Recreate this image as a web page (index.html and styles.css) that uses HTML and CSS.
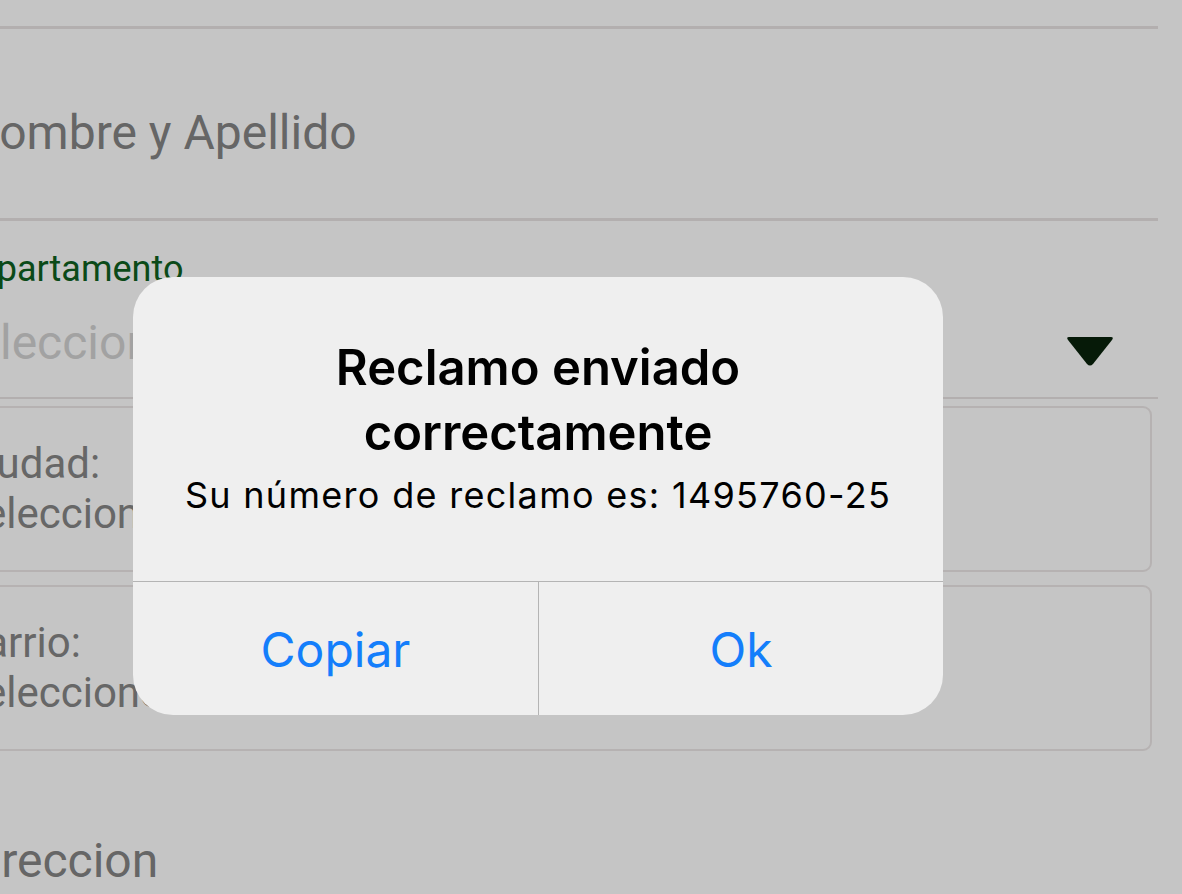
FILE: index.html
```html
<!DOCTYPE html>
<html lang="es">
<head>
<meta charset="utf-8">
<title>Reclamo</title>
<link rel="stylesheet" href="styles.css">
</head>
<body>
<div class="screen">
  <div class="form">
    <div class="rule"></div>
    <div class="field field-name"><span class="value shift-n">Nombre y Apellido</span></div>
    <div class="rule"></div>
    <div class="field field-select">
      <div class="select-label">Departamento</div>
      <div class="select-row">
        <span class="placeholder">Seleccione</span>
        <svg class="caret" width="48" height="32" viewBox="0 0 48 32"><path d="M3 2 H45 Q48 2 46 5 L27 29 Q24 32 21 29 L2 5 Q0 2 3 2 Z" fill="#061a08"/></svg>
      </div>
    </div>
    <div class="rule rule-short"></div>
    <div class="box">
      <div class="box-label">Ciudad:</div>
      <div class="box-value">Seleccione</div>
    </div>
    <div class="box box-second">
      <div class="box-label">Barrio:</div>
      <div class="box-value">Seleccione</div>
    </div>
    <div class="field field-dir"><span class="value shift-d">Direccion</span></div>
  </div>

  <div class="alert" role="alertdialog">
    <div class="alert-body">
      <div class="alert-title">Reclamo enviado correctamente</div>
      <div class="alert-msg">Su número de reclamo es: 1495760-25</div>
    </div>
    <div class="alert-actions">
      <button class="alert-btn">Copiar</button>
      <button class="alert-btn">Ok</button>
    </div>
  </div>
</div>
</body>
</html>
```
FILE: styles.css
```css
* { box-sizing: border-box; }
html, body { margin: 0; padding: 0; }
body {
  background: #c5c5c5;
  width: 1182px;
  height: 894px;
  overflow: hidden;
  font-family: Roboto, "Liberation Sans", sans-serif;
}
.screen {
  position: relative;
  width: 1182px;
  height: 894px;
  overflow: hidden;
}
.form {
  width: 1158px;
  padding-top: 26px;
}
.rule {
  height: 3px;
  background: #b3afaf;
}
.field {
  color: #666666;
  font-size: 48px;
  white-space: nowrap;
}
.field-name {
  height: 189px;
  padding-top: 76px;
  line-height: 56px;
}
.shift-n { margin-left: -35px; display: inline-block; }
.field-select {
  height: 176px;
  padding-top: 28px;
  position: relative;
}
.select-label {
  color: #0b4a18;
  font-size: 36px;
  line-height: 40px;
  margin-left: -46px;
  white-space: nowrap;
}
.select-row {
  display: flex;
  align-items: center;
  justify-content: space-between;
  padding-right: 44px;
  margin-top: 24px;
  height: 60px;
}
.placeholder {
  color: #a2a2a2;
  font-size: 48px;
  margin-left: -54px;
  line-height: 56px;
}
.caret { display: block; margin-top: 16px; }
.rule-short { height: 2px; }
.box {
  margin-left: -40px;
  margin-top: 7px;
  width: 1192px;
  height: 166px;
  border: 2px solid #b6b2b2;
  border-radius: 9px;
  color: #676767;
  font-size: 42px;
  line-height: 50px;
  padding-top: 31px;
  white-space: nowrap;
}
.box-second { margin-top: 13px; }
.box-label { margin-left: -3px; }
.box-value { margin-left: -3px; }
.field-dir {
  padding-top: 82px;
  line-height: 56px;
}
.shift-d { margin-left: -42px; display: inline-block; }

/* alert */
.alert {
  position: absolute;
  left: 133px;
  top: 277px;
  width: 810px;
  height: 438px;
  background: #efefef;
  border-radius: 40px;
  overflow: hidden;
  display: flex;
  flex-direction: column;
  font-family: Inter, "Noto Sans", sans-serif;
}
.alert-body {
  height: 305px;
  padding: 58px 30px 0;
  text-align: center;
  border-bottom: 1px solid #b4b4b4;
}
.alert-title {
  font-weight: 600;
  font-size: 49px;
  line-height: 65px;
  color: #000;
  padding: 0 100px;
}
.alert-msg {
  font-size: 36px;
  line-height: 44px;
  letter-spacing: 1.3px;
  color: #000;
  margin-top: 8px;
}
.alert-actions {
  flex: 1;
  display: grid;
  grid-template-columns: 1fr 1fr;
}
.alert-btn {
  border: 0;
  background: transparent;
  font-family: Inter, "Noto Sans", sans-serif;
  font-size: 48px;
  color: #147efb;
  padding: 1px 0 0;
  margin: 0;
}
.alert-btn + .alert-btn { border-left: 1px solid #b4b4b4; }
```
